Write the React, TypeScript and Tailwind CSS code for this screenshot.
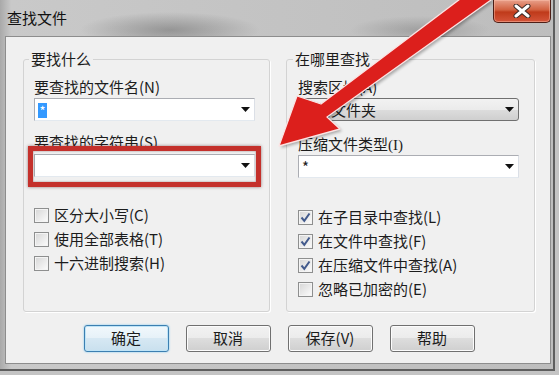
import React from "react";

interface CheckProps {
  label: React.ReactNode;
  checked?: boolean;
}

// little black triangle used by all combo boxes
function DropTri() {
  return (
    <svg width="9" height="5" viewBox="0 0 9 5">
      <path d="M0 0h9L4.5 5z" fill="#111" />
    </svg>
  );
}

function EditCombo({ children }: { children?: React.ReactNode }) {
  return (
    <div className="flex h-[23px] w-[221px] items-center border border-[#abadb3] border-r-[#dbdfe6] border-b-[#e3e9ef] bg-white">
      <div className="flex flex-1 items-center pl-[3px]">{children}</div>
      <div className="flex w-[17px] justify-center">
        <DropTri />
      </div>
    </div>
  );
}

function ListCombo({ children }: { children?: React.ReactNode }) {
  return (
    <div className="flex h-[23px] w-[221px] items-center rounded-[3px] border border-[#707070] bg-[linear-gradient(#f2f2f2,#ebebeb_50%,#dddddd_50%,#cfcfcf)]">
      <div className="flex-1 pl-[2px] text-[15px] leading-[20px]">{children}</div>
      <div className="flex w-[17px] justify-center">
        <DropTri />
      </div>
    </div>
  );
}

function Check({ label, checked }: CheckProps) {
  return (
    <div className="flex h-[24px] items-center gap-[5px]">
      <span className="flex h-[15px] w-[15px] items-center justify-center border border-[#8e8f8f] bg-[linear-gradient(135deg,#d6d6d6,#fdfdfd)] shadow-[inset_0_0_0_1px_#f4f4f4]">
        {checked && (
          <svg width="11" height="11" viewBox="0 0 11 11">
            <path d="M1.5 5.5 4.3 8.8 9.5 1.5" fill="none" stroke="#425a8c" strokeWidth="2" />
          </svg>
        )}
      </span>
      <span className="text-[15px] leading-[20px]">{label}</span>
    </div>
  );
}

function Btn({ children, primary }: { children: React.ReactNode; primary?: boolean }) {
  return (
    <button
      className={
        primary
          ? "h-[27px] w-[85px] rounded-[3px] border border-[#3c7fb1] bg-[linear-gradient(#f1f8fc,#e6f1f8_50%,#d6e8f3_50%,#c9e0ee)] text-[15px] shadow-[0_0_2px_#6cc3f0,inset_0_0_0_1px_#bfe4f7]"
          : "h-[27px] w-[85px] rounded-[3px] border border-[#707070] bg-[linear-gradient(#f2f2f2,#ebebeb_50%,#dddddd_50%,#cfcfcf)] text-[15px] shadow-[inset_0_0_0_1px_#fcfcfc]"
      }
    >
      {children}
    </button>
  );
}

export default function App() {
  return (
    <div className="relative flex h-[375px] w-[559px] flex-col overflow-hidden bg-[radial-gradient(ellipse_90px_18px_at_170px_30px,rgba(90,90,90,0.45),transparent),radial-gradient(ellipse_70px_14px_at_420px_30px,rgba(100,100,100,0.35),transparent),linear-gradient(90deg,#a9a9a9,#c9c9c9_2%,#c3c3c3_50%,#bdbdbd)] pb-[11px] pl-[5px] pr-[8px] font-['Noto_Sans_CJK_SC','Liberation_Sans',sans-serif] text-[#1c1c1c] shadow-[inset_-4px_-4px_0_#c4c4c4,inset_-6px_-6px_0_#5e5e5e]">
      {/* title bar */}
      <div className="flex h-[36px] items-start justify-between">
        <div className="pl-[2px] pt-[8px] text-[15px] leading-[20px] text-[#111]">查找文件</div>
        <div className="flex h-[23px] w-[58px] items-center justify-center rounded-b-[5px] border border-t-0 border-[#4d1e16] bg-[linear-gradient(#e8a08a,#d2603f_45%,#bf3a1a_55%,#d4553a)] shadow-[inset_0_0_0_1px_rgba(255,200,180,0.45)]">
          <svg width="18" height="14" viewBox="0 0 18 14">
            <path d="M3 2 15 12M15 2 3 12" stroke="#3a2a26" strokeWidth="5" strokeLinecap="round" />
            <path d="M3 2 15 12M15 2 3 12" stroke="#ffffff" strokeWidth="3" strokeLinecap="round" />
          </svg>
        </div>
      </div>

      {/* client area */}
      <div className="flex flex-1 flex-col border border-[#8d8d8d] bg-[#f0f0f0]">
        <div className="mt-[12px] flex gap-[16px] pl-[17px]">
          <fieldset className="h-[263px] w-[247px] rounded-[3px] border border-[#d3d3d3] px-[10px] shadow-[1px_1px_0_#fff]">
            <legend className="-ml-[5px] px-[2px] text-[15px] leading-[20px]">要找什么</legend>
            <div className="mt-[8px] text-[15px] leading-[20px]">要查找的文件名(N)</div>
            <div className="mt-[1px]">
              <EditCombo>
                <span className="mt-[1px] flex h-[15px] w-[9px] items-center justify-center bg-[#3399ff] text-[13px] leading-[15px] text-white">*</span>
              </EditCombo>
            </div>
            <div className="mt-[11px] text-[15px] leading-[20px]">要查找的字符串(S)</div>
            <div className="mt-[2px]">
              <EditCombo />
            </div>
            <div className="mt-[26px] flex flex-col">
              <Check label="区分大小写(C)" />
              <Check label="使用全部表格(T)" />
              <Check label="十六进制搜索(H)" />
            </div>
          </fieldset>

          <fieldset className="h-[263px] w-[249px] rounded-[3px] border border-[#d3d3d3] px-[11px] shadow-[1px_1px_0_#fff]">
            <legend className="-ml-[5px] px-[2px] text-[15px] leading-[20px]">在哪里查找</legend>
            <div className="mt-[8px] text-[15px] leading-[20px]">搜索区域(A)</div>
            <div className="mt-[1px]">
              <ListCombo>当前文件夹</ListCombo>
            </div>
            <div className="mt-[13px] text-[15px] leading-[20px]">
              压缩文件类型<span className="font-['Liberation_Serif',serif]">(I)</span>
            </div>
            <div>
              <EditCombo>
                <span className="text-[15px] leading-[20px]">*</span>
              </EditCombo>
            </div>
            <div className="mt-[27px] flex flex-col">
              <Check checked label="在子目录中查找(L)" />
              <Check checked label="在文件中查找(F)" />
              <Check checked label="在压缩文件中查找(A)" />
              <Check label="忽略已加密的(E)" />
            </div>
          </fieldset>
        </div>

        <div className="mt-[13px] flex justify-center gap-[17px] pl-[2px]">
          <Btn primary>确定</Btn>
          <Btn>取消</Btn>
          <Btn>保存(V)</Btn>
          <Btn>帮助</Btn>
        </div>
      </div>

      {/* annotation: red box */}
      <div className="pointer-events-none absolute left-[28px] top-[146px] h-[41px] w-[233px] border-[5px] border-[#c4302b] shadow-[0_0_3px_rgba(60,0,0,0.5),inset_0_0_2px_rgba(60,0,0,0.5)]" />

      {/* annotation: red arrow */}
      <svg className="pointer-events-none absolute left-0 top-0" width="559" height="375" viewBox="0 0 559 375">
        <defs>
          <filter id="sh" x="-20%" y="-20%" width="140%" height="140%">
            <feGaussianBlur stdDeviation="1.5" />
          </filter>
        </defs>
        <path
          d="M281 148 L342 131 L329 119 L493 2 L474 -8 L323 106 L299 98 Z"
          fill="#000"
          opacity="0.3"
          filter="url(#sh)"
        />
        <path
          d="M279 146 L340 129 L327 117 L491 0 L472 -10 L321 104 L297 96 Z"
          fill="#dc1f1c"
          stroke="#fbe3e3"
          strokeWidth="1.3"
          strokeLinejoin="round"
        />
      </svg>
    </div>
  );
}
